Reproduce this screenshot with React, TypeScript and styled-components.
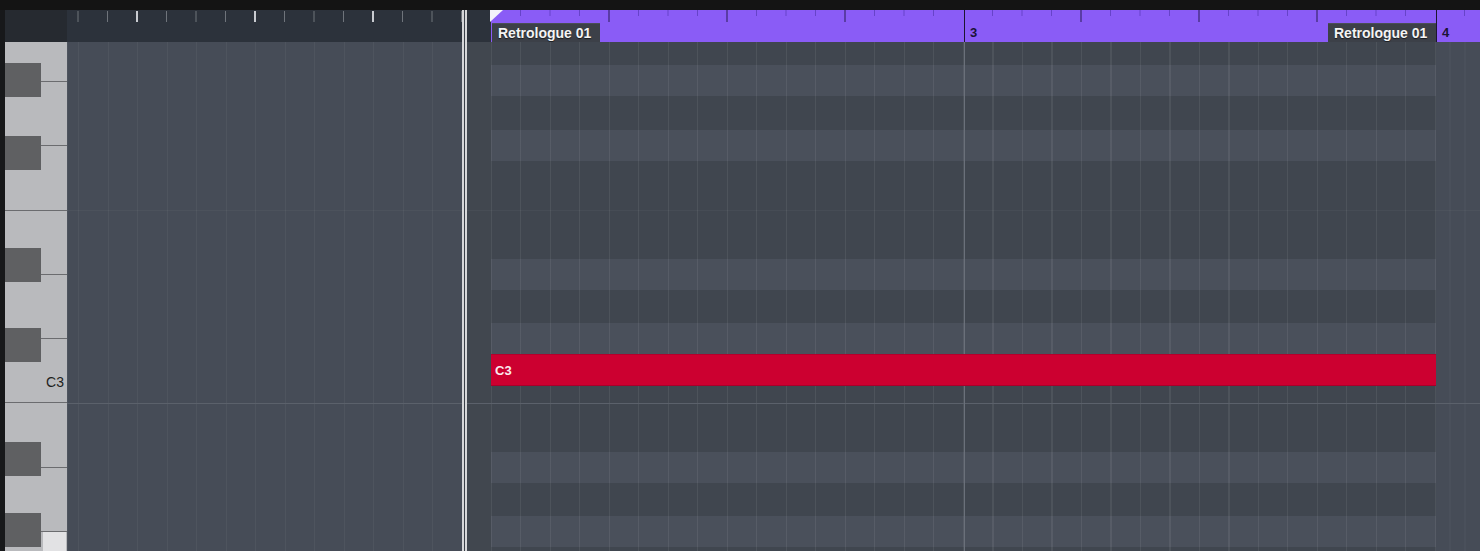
import React from "react";
import styled, { createGlobalStyle } from "styled-components";

const GlobalStyle = createGlobalStyle`
  html, body {
    margin: 0;
    padding: 0;
    background: #141414;
    overflow: hidden;
  }
  body {
    font-family: "Liberation Sans", Arial, Helvetica, sans-serif;
  }
`;

// page x of bar 2 (where the part starts) and the width of one 16th
const BAR2_X = 491;
const STEP = 29.5;
const EDITOR_X = 67;
const RULER_H = 32;

const lineOffset = (x: number) => (((BAR2_X - x) % STEP) + STEP) % STEP;

const gridLines = (x: number, color: string) =>
  `repeating-linear-gradient(to right, ${color} 0 1px, transparent 1px ${STEP}px) ${lineOffset(x)}px 0 / auto`;

const Screen = styled.div`
  width: 1480px;
  height: 551px;
  display: flex;
  flex-direction: column;
  background: #141414;
  overflow: hidden;
`;

const TopBar = styled.div`
  height: 10px;
  flex: none;
  background: #141414;
`;

const Workspace = styled.div`
  flex: 1;
  display: flex;
  min-height: 0;
`;

const EdgeStrip = styled.div`
  width: 5px;
  flex: none;
  background: #17181a;
`;

const KeyColumn = styled.div`
  width: 62px;
  flex: none;
  display: flex;
  flex-direction: column;
`;

const RulerCorner = styled.div`
  height: ${RULER_H}px;
  flex: none;
  background: #262a30;
`;

const Keyboard = styled.div`
  flex: 1;
  position: relative;
  display: flex;
  flex-direction: column;
  overflow: hidden;
  background: #b9babd;
`;

const WhiteKey = styled.div<{ $h: number; $last?: boolean }>`
  height: ${(p) => p.$h}px;
  flex: none;
  box-sizing: border-box;
  display: flex;
  align-items: flex-end;
  justify-content: flex-end;
  border-bottom: ${(p) => (p.$last ? "none" : "1px solid #6b6c6f")};
  background: #b9babd;
`;

const KeyLabel = styled.span`
  font-size: 14px;
  line-height: 16px;
  color: #1e1f21;
  padding: 0 3px 12px 0;
`;

const PressedKey = styled.div`
  width: 23px;
  height: 100%;
  margin-right: 1px;
  margin-top: 1px;
  background: #e2e2e4;
`;

const BlackKey = styled.div<{ $top: number }>`
  position: absolute;
  left: 0;
  top: ${(p) => p.$top}px;
  width: 36px;
  height: 34px;
  background: #5f6062;
`;

const EditorColumn = styled.div`
  flex: 1;
  display: flex;
  flex-direction: column;
  position: relative;
  min-width: 0;
`;

const Ruler = styled.div`
  height: ${RULER_H}px;
  flex: none;
  display: flex;
  position: relative;
`;

const TimeRuler = styled.div`
  width: ${BAR2_X - EDITOR_X}px;
  flex: none;
  background: #2c323b;
`;

const PartRuler = styled.div`
  flex: 1;
  display: flex;
  background: #8a5cf6;
`;

const Bar = styled.div<{ $w?: number; $first?: boolean }>`
  ${(p) => (p.$w ? `width: ${p.$w}px; flex: none;` : "flex: 1;")}
  box-sizing: border-box;
  display: flex;
  align-items: flex-end;
  border-left: ${(p) => (p.$first ? "none" : "1px solid #1c1530")};
`;

const BarNumber = styled.span`
  height: 19px;
  line-height: 19px;
  padding-left: 5px;
  font-size: 13px;
  font-weight: 700;
  color: #1b1336;
`;

const PartName = styled.div<{ $end?: boolean }>`
  width: 108px;
  height: 19px;
  box-sizing: border-box;
  padding-left: 6px;
  margin-left: ${(p) => (p.$end ? "auto" : "1px")};
  background: #3c4048;
  border-top: 1px solid #4a4e56;
  font-size: 14px;
  font-weight: 700;
  line-height: 18px;
  color: #f4f4f4;
  text-shadow: 0 1px 1px rgba(0, 0, 0, 0.6);
  white-space: nowrap;
`;

const TickLayer = styled.svg`
  position: absolute;
  left: 0;
  top: 0;
  pointer-events: none;
`;

const Grid = styled.div`
  flex: 1;
  display: flex;
  position: relative;
  min-height: 0;
`;

const OpenArea = styled.div<{ $x: number; $w?: number }>`
  ${(p) => (p.$w ? `width: ${p.$w}px; flex: none;` : "flex: 1;")}
  background: ${(p) => gridLines(p.$x, "rgba(255,255,255,0.045)")}, #464c57;
`;

const LeadIn = styled.div`
  width: 29px;
  flex: none;
  background: #41474f;
`;

const Part = styled.div`
  width: 945px;
  flex: none;
  display: flex;
  flex-direction: column;
`;

const Lane = styled.div<{ $h: number; $light?: boolean }>`
  height: ${(p) => p.$h}px;
  flex: none;
  display: flex;
  background: ${gridLines(BAR2_X, "rgba(255,255,255,0.07)")},
    ${(p) => (p.$light ? "#4a505b" : "#40464f")};
`;

const Note = styled.div`
  flex: 1;
  position: relative;
  z-index: 2;
  box-sizing: border-box;
  display: flex;
  align-items: center;
  padding-left: 4px;
  background: #cc0030;
  border-top: 1px solid #b3002b;
  border-bottom: 1px solid #a8002a;
  font-size: 13px;
  font-weight: 700;
  color: #fbeaee;
`;

const KeyLine = styled.div<{ $y: number; $octave?: boolean }>`
  position: absolute;
  left: 0;
  right: 0;
  top: ${(p) => p.$y}px;
  height: 1px;
  background: ${(p) => (p.$octave ? "#5b616b" : "rgba(255,255,255,0.035)")};
  pointer-events: none;
`;

const BarLine = styled.div<{ $x: number }>`
  position: absolute;
  top: 0;
  bottom: 0;
  left: ${(p) => p.$x}px;
  width: 1px;
  background: #6a707a;
  pointer-events: none;
`;

const Locator = styled.div<{ $x: number }>`
  position: absolute;
  top: 0;
  bottom: 0;
  left: ${(p) => p.$x}px;
  width: 5px;
  box-sizing: border-box;
  border-left: 2px solid #d6d7d9;
  border-right: 2px solid #d6d7d9;
  background: #3b4048;
  z-index: 3;
`;

const whiteKeys = [40, 64, 65, 64, 64, 64, 65, 64, 19];
const blackKeyTops = [21, 94, 206, 286, 400, 471];

const lanes: { h: number; light?: boolean; note?: string }[] = [
  { h: 23 },
  { h: 31, light: true },
  { h: 34 },
  { h: 31, light: true },
  { h: 98 },
  { h: 31, light: true },
  { h: 33 },
  { h: 31, light: true },
  { h: 32, note: "C3" },
  { h: 66 },
  { h: 31, light: true },
  { h: 33 },
  { h: 31, light: true },
  { h: 4 },
];

const RulerTicks = ({ width }: { width: number }) => {
  const start = BAR2_X - EDITOR_X;
  const ticks: React.ReactNode[] = [];
  for (let k = -14; start + k * STEP < width; k++) {
    if (k % 16 === 0) continue; // bar lines come from the bars themselves
    const x = start + k * STEP;
    const beat = k % 4 === 0;
    if (x < start) {
      ticks.push(
        <rect
          key={k}
          x={x - (beat ? 1 : 0.5)}
          y={1}
          width={beat ? 2 : 1}
          height={11}
          fill={beat ? "#c9ccd1" : "#6f747b"}
        />
      );
    } else {
      ticks.push(
        <rect
          key={k}
          x={x - 0.5}
          y={0}
          width={1}
          height={beat ? 12 : 6}
          fill={beat ? "#2a1c55" : "#6643c9"}
        />
      );
    }
  }
  return (
    <TickLayer width={width} height={RULER_H}>
      {ticks}
      <polygon points={`${start - 1},0 ${start + 12},0 ${start - 1},12`} fill="#f4f2fa" />
    </TickLayer>
  );
};

const PianoRoll = () => {
  const editorWidth = 1480 - EDITOR_X;
  return (
    <Screen>
      <TopBar />
      <Workspace>
        <EdgeStrip />
        <KeyColumn>
          <RulerCorner />
          <Keyboard>
            {whiteKeys.map((h, i) => (
              <WhiteKey key={i} $h={h} $last={i === whiteKeys.length - 1}>
                {i === 5 && <KeyLabel>C3</KeyLabel>}
                {i === whiteKeys.length - 1 && <PressedKey />}
              </WhiteKey>
            ))}
            {blackKeyTops.map((top) => (
              <BlackKey key={top} $top={top} />
            ))}
          </Keyboard>
        </KeyColumn>
        <EditorColumn>
          <Ruler>
            <TimeRuler />
            <PartRuler>
              <Bar $w={473} $first>
                <PartName>Retrologue 01</PartName>
              </Bar>
              <Bar $w={472}>
                <BarNumber>3</BarNumber>
                <PartName $end>Retrologue 01</PartName>
              </Bar>
              <Bar>
                <BarNumber>4</BarNumber>
              </Bar>
            </PartRuler>
            <RulerTicks width={editorWidth} />
          </Ruler>
          <Grid>
            <OpenArea $x={EDITOR_X} $w={462 - EDITOR_X} />
            <LeadIn />
            <Part>
              {lanes.map((lane, i) => (
                <Lane key={i} $h={lane.h} $light={lane.light}>
                  {lane.note && <Note>{lane.note}</Note>}
                </Lane>
              ))}
            </Part>
            <OpenArea $x={1436} />
            <KeyLine $y={210 - 42} />
            <KeyLine $y={403 - 42} $octave />
            <BarLine $x={964 - EDITOR_X} />
          </Grid>
          <Locator $x={462 - EDITOR_X} />
        </EditorColumn>
      </Workspace>
    </Screen>
  );
};

export default function App() {
  return (
    <>
      <GlobalStyle />
      <PianoRoll />
    </>
  );
}
